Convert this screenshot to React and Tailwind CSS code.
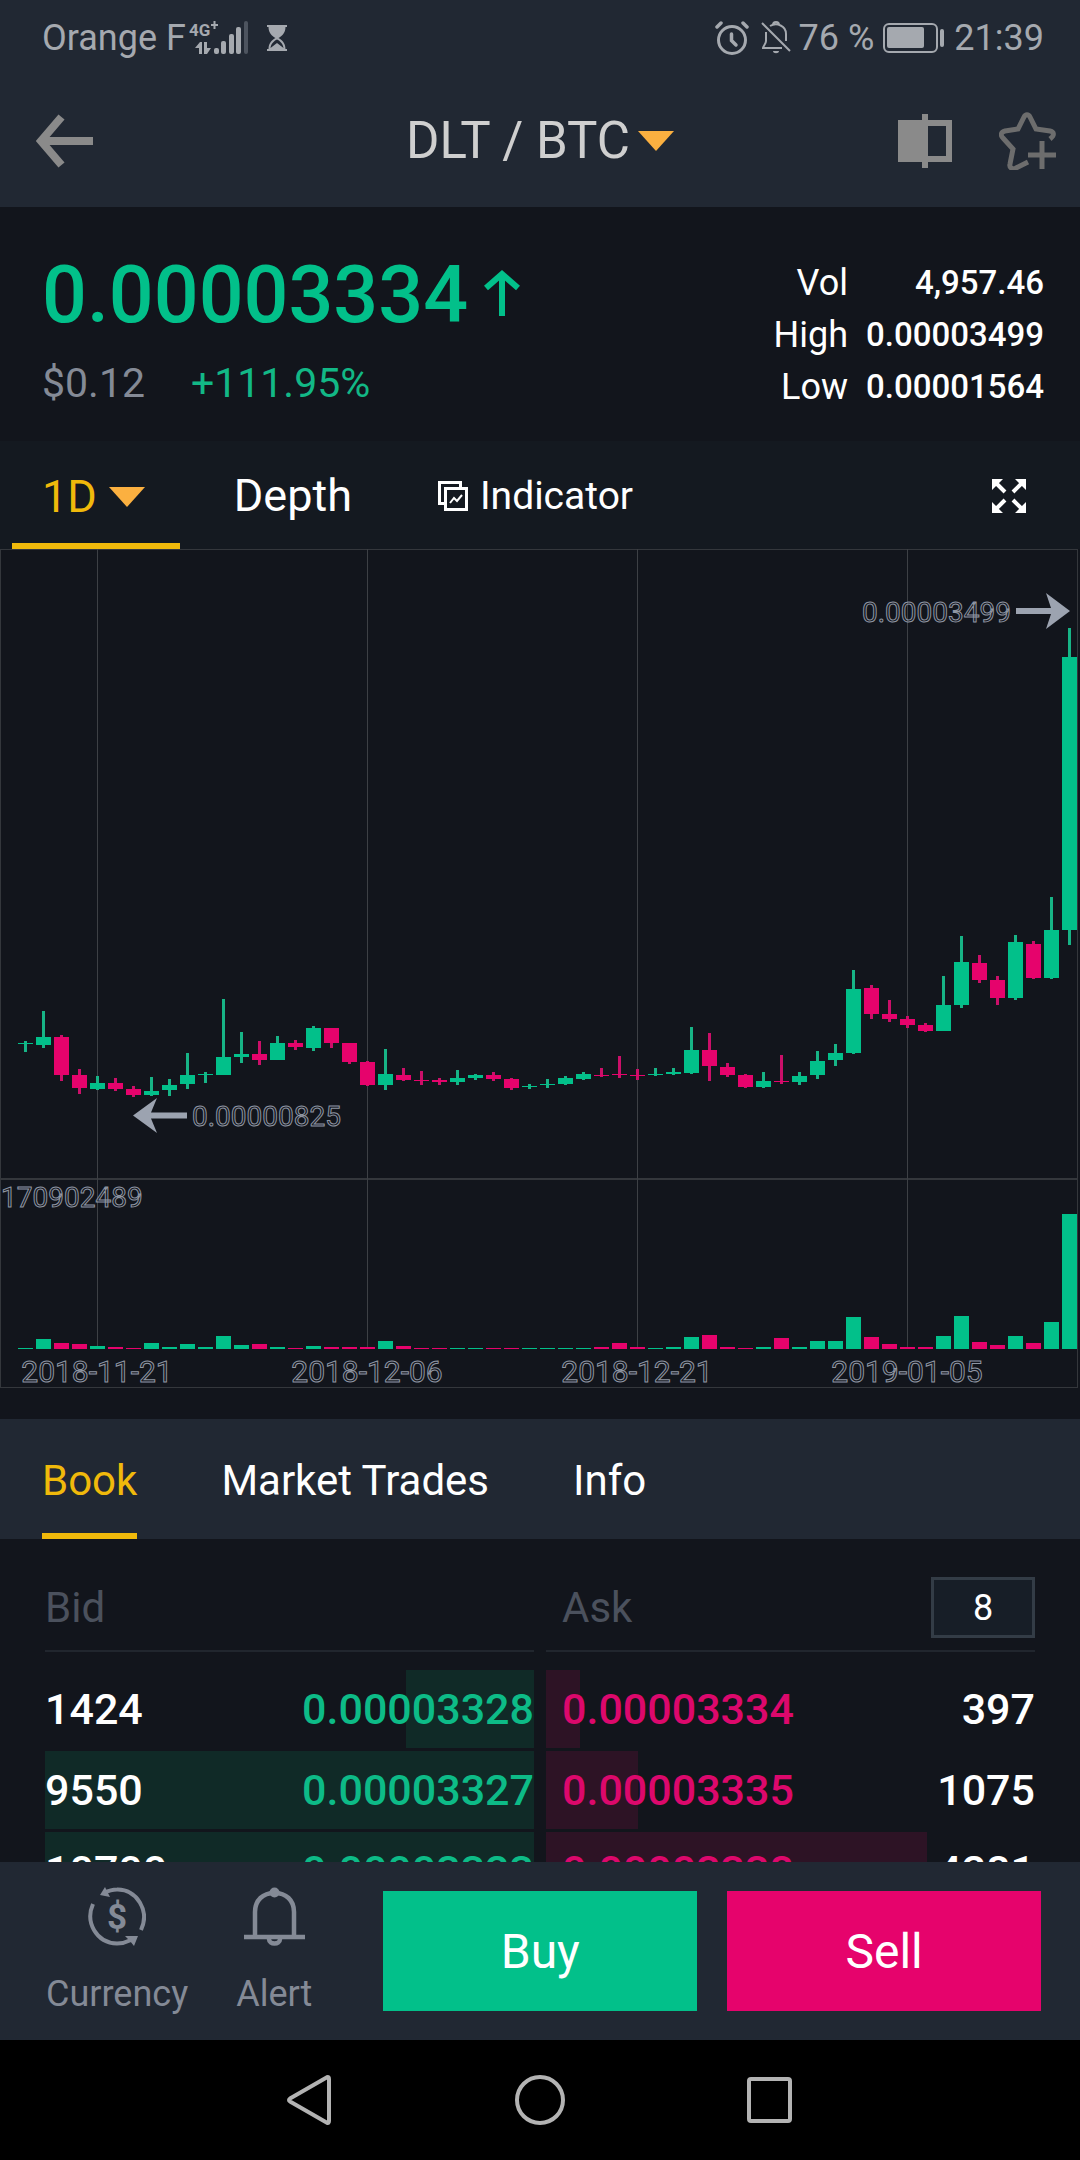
import { useState } from "react";

// [direction, high, bodyTop, bodyBottom, low, volume]
const candles = [
  ["up", 1041, 1043, 1044, 1052, 1],
  ["up", 1011, 1037, 1045, 1048, 10],
  ["down", 1035, 1037, 1075, 1081, 6],
  ["down", 1069, 1075, 1088, 1094, 5],
  ["up", 1076, 1083, 1089, 1090, 3],
  ["down", 1078, 1083, 1089, 1091, 2],
  ["down", 1086, 1089, 1095, 1097, 1],
  ["up", 1077, 1091, 1095, 1096, 6],
  ["up", 1079, 1085, 1090, 1096, 2],
  ["up", 1053, 1075, 1084, 1089, 5],
  ["up", 1072, 1074, 1075, 1083, 2],
  ["up", 999, 1057, 1075, 1075, 13],
  ["up", 1032, 1054, 1057, 1063, 4],
  ["down", 1041, 1054, 1060, 1065, 5],
  ["up", 1036, 1043, 1060, 1060, 2],
  ["down", 1040, 1043, 1047, 1050, 1],
  ["up", 1026, 1028, 1048, 1051, 3],
  ["down", 1028, 1028, 1043, 1048, 2],
  ["down", 1043, 1043, 1062, 1064, 2],
  ["down", 1061, 1062, 1085, 1086, 2],
  ["up", 1049, 1074, 1085, 1090, 8],
  ["down", 1068, 1075, 1080, 1081, 3],
  ["down", 1071, 1080, 1081, 1085, 1],
  ["down", 1078, 1080, 1082, 1085, 1],
  ["up", 1070, 1078, 1082, 1085, 1],
  ["up", 1074, 1075, 1078, 1080, 1],
  ["down", 1072, 1075, 1079, 1081, 1],
  ["down", 1078, 1079, 1088, 1090, 1],
  ["up", 1084, 1086, 1087, 1089, 1],
  ["up", 1079, 1084, 1085, 1088, 1],
  ["up", 1076, 1078, 1084, 1085, 1],
  ["up", 1072, 1074, 1079, 1080, 1],
  ["down", 1068, 1075, 1076, 1077, 2],
  ["down", 1056, 1074, 1075, 1078, 6],
  ["down", 1069, 1075, 1076, 1080, 2],
  ["up", 1068, 1074, 1075, 1076, 1],
  ["up", 1068, 1072, 1074, 1075, 2],
  ["up", 1027, 1050, 1073, 1074, 12],
  ["down", 1033, 1050, 1066, 1081, 14],
  ["down", 1063, 1067, 1075, 1077, 2],
  ["down", 1074, 1075, 1087, 1088, 1],
  ["up", 1072, 1081, 1087, 1088, 2],
  ["down", 1055, 1081, 1082, 1084, 11],
  ["up", 1072, 1076, 1082, 1085, 2],
  ["up", 1051, 1061, 1075, 1079, 8],
  ["up", 1044, 1053, 1060, 1066, 8],
  ["up", 970, 989, 1053, 1054, 32],
  ["down", 985, 988, 1014, 1019, 12],
  ["down", 1000, 1014, 1019, 1022, 5],
  ["down", 1016, 1019, 1025, 1028, 2],
  ["down", 1023, 1025, 1031, 1032, 2],
  ["up", 976, 1005, 1031, 1031, 13],
  ["up", 936, 962, 1005, 1008, 33],
  ["down", 955, 963, 980, 983, 7],
  ["down", 976, 980, 998, 1005, 4],
  ["up", 935, 942, 998, 1000, 13],
  ["down", 941, 944, 978, 979, 6],
  ["up", 897, 930, 978, 979, 27],
  ["up", 628, 657, 930, 945, 135],
];

const dates = [
  { x: 97, label: "2018-11-21" },
  { x: 367, label: "2018-12-06" },
  { x: 637, label: "2018-12-21" },
  { x: 907, label: "2019-01-05" },
];

const stats = [
  { label: "Vol", value: "4,957.46" },
  { label: "High", value: "0.00003499" },
  { label: "Low", value: "0.00001564" },
];

const bids = [
  { amount: "1424", price: "0.00003328", depth: 26.2 },
  { amount: "9550", price: "0.00003327", depth: 100 },
  { amount: "10700", price: "0.00003323", depth: 100 },
];

const asks = [
  { amount: "397", price: "0.00003334", depth: 7 },
  { amount: "1075", price: "0.00003335", depth: 18.8 },
  { amount: "4281", price: "0.00003338", depth: 77.9 },
];

const Caret = () => (
  <svg width="36" height="20" viewBox="0 0 36 20">
    <path d="M0 0H36L18 20Z" fill="#fbb040" />
  </svg>
);

const StatusBar = () => (
  <div className="flex h-[75px] items-center pr-9 pl-[42px] text-[36px] text-[#a5a9af]">
    <span>Orange F</span>
    <svg className="ml-[3px]" width="62" height="36" viewBox="0 0 62 36" fill="currentColor">
      <text x="0" y="16" fontSize="17" fontWeight="700">4G</text>
      <path d="M22 4h2.500v-3h2v3h2.500v2h-2.500v3h-2v-3h-2.500z" />
      <path d="M6 28l5-6h2v12h-3v-6zM15 22h3v6h4l-4 6h-3z" />
      <rect x="25" y="28" width="5" height="6" rx="2" />
      <rect x="32" y="21" width="5" height="13" rx="2" />
      <rect x="40" y="14" width="5" height="20" rx="2" />
      <rect x="47" y="7" width="5" height="27" rx="2" />
      <rect x="55" y="1" width="4" height="33" rx="2" fill="#4d545f" />
    </svg>
    <svg className="ml-4" width="20" height="26" viewBox="0 0 20 26" fill="currentColor">
      <path d="M0 0H20V2H18.500C18.500 8 15 11 11.500 13C15 15 18.500 18 18.500 24H20V26H0V24H1.500C1.500 18 5 15 8.500 13C5 11 1.500 8 1.500 2H0ZM3.500 23L10 18L16.500 23C16 18.500 13 16 10 14.500C7 16 4 18.500 3.500 23Z" fillRule="evenodd" />
    </svg>
    <svg className="ml-auto" width="34" height="34" viewBox="0 0 34 34" fill="none" stroke="currentColor" strokeLinecap="round">
      <circle cx="17" cy="19" r="13.500" strokeWidth="3" />
      <path d="M16.500 13V19.500L21 24" strokeWidth="3.500" />
      <path d="M2 6L6 2M28 2L32 6" strokeWidth="3.500" />
    </svg>
    <svg className="ml-3" width="30" height="34" viewBox="0 0 30 34" fill="none" stroke="currentColor" strokeWidth="2">
      <path d="M5 11V20C5 23 2 25 2 27H21M9 5C16 1 25 5 25 13V20M12 4C12 0 18 0 18 4M1 2L29 30" />
      <path d="M12 30H18C18 33 12 33 12 30Z" fill="currentColor" stroke="none" />
    </svg>
    <span className="ml-2">76 %</span>
    <svg className="ml-[9px]" width="62" height="30" viewBox="0 0 62 30" fill="currentColor">
      <rect x="1" y="1" width="53" height="28" rx="5" fill="none" stroke="currentColor" strokeWidth="2" />
      <rect x="4" y="4" width="37" height="21" rx="2" />
      <rect x="57" y="6" width="4" height="18" rx="2" />
    </svg>
    <span className="ml-[9px]">21:39</span>
  </div>
);

const AppBar = () => (
  <div className="flex h-[132px] items-center justify-between px-6">
    <div className="flex flex-1">
      <button className="ml-3" aria-label="Back">
        <svg width="57" height="54" viewBox="0 0 57 54" fill="none" stroke="#8a8a8a" strokeWidth="8">
          <path d="M25.500 3L5 27L25.500 51M6 27H57" />
        </svg>
      </button>
    </div>
    <button className="flex items-center gap-2 text-[51px] leading-[60px] text-[#cfcfcf]">
      <span>DLT / BTC</span>
      <Caret />
    </button>
    <div className="flex flex-1 items-center justify-end gap-[47px]">
      <button aria-label="Layout">
        <svg width="54" height="54" viewBox="0 0 54 54" fill="#8a8a8a">
          <path d="M0 6H24V0H30V6H54V48H30V54H24V48H0ZM30 12V42H48V12Z" fillRule="evenodd" />
        </svg>
      </button>
      <button aria-label="Add to favorites">
        <svg width="57" height="58" viewBox="0 0 57 58" fill="none" stroke="#6d6d6d" strokeWidth="5">
          <path d="M29 50L17 56C14 58 10 56 11 52L14 37L4 26C1 23 2 20 6 19L19 17L25 5C26.500 2 29.500 2 31 5L37 17L51 19C55 20 56 23 51 27" />
          <path d="M43 29V57M29 43H57" />
        </svg>
      </button>
    </div>
  </div>
);

const Summary = () => (
  <section className="flex items-start justify-between pt-12 pr-9 pb-7 pl-[42px]">
    <div>
      <div className="flex items-center gap-4 text-[79px] leading-[80px] font-medium text-[#02c08a]">
        <span>0.00003334</span>
        <svg className="mb-1" width="36" height="46" viewBox="0 0 36 46" fill="none" stroke="currentColor" strokeWidth="6">
          <path d="M2 18L18 4L34 18M18 4V46" />
        </svg>
      </div>
      <div className="mt-5 flex gap-[46px] text-[41px] leading-[56px]">
        <span className="text-[#848a96]">$0.12</span>
        <span className="text-[#12b886]">+111.95%</span>
      </div>
    </div>
    <dl className="grid grid-cols-[auto_auto] gap-x-[18px] pt-0.5 text-right leading-[52px] text-white">
      {stats.map((stat) => (
        <div key={stat.label} className="contents">
          <dt className="text-[36px]">{stat.label}</dt>
          <dd className="text-[33px] font-medium">{stat.value}</dd>
        </div>
      ))}
    </dl>
  </section>
);

const ChartTabs = () => (
  <div className="flex h-[108px] items-center bg-[#141920] pt-0.5 pr-[54px] pl-3 text-[45px] text-white">
    <button className="flex h-full items-center gap-3 border-b-6 border-[#f0b90b] pt-2 pr-[35px] pl-[30px] text-[#f0b90b]">
      <span>1D</span>
      <Caret />
    </button>
    <button className="ml-[54px]">Depth</button>
    <button className="ml-[86px] flex items-center gap-3 text-[39px]">
      <svg width="30" height="30" viewBox="0 0 30 30" fill="none" stroke="currentColor" strokeWidth="3">
        <path d="M6 22.500H1.500V1.500H22.500V6" />
        <rect x="7.500" y="7.500" width="21" height="21" />
        <path d="M12 22L16 17L19 20L24 14" strokeWidth="2" />
      </svg>
      <span>Indicator</span>
    </button>
    <button className="ml-auto" aria-label="Full screen">
      <svg width="34" height="34" viewBox="0 0 34 34" fill="currentColor" stroke="currentColor">
        <path d="M0 0H11L0 11ZM34 0V11L23 0ZM0 34V23L11 34ZM34 34H23L34 23Z" stroke="none" />
        <path d="M4 4L13 13M30 4L21 13M4 30L13 21M30 30L21 21" strokeWidth="4" />
      </svg>
    </button>
  </div>
);

const Chart = () => (
  <svg className="block w-full" viewBox="0 549 1080 870" role="img" aria-label="DLT / BTC daily candles">
    <g fill="#34373c">
      <rect x="0" y="549" width="1078" height="1" />
      <rect x="0" y="1178" width="1078" height="2" />
      <rect x="0" y="1387" width="1078" height="1" />
      <rect x="0" y="549" width="1" height="839" />
      <rect x="1077" y="549" width="1" height="839" />
      {dates.map((date) => (
        <rect key={date.x} x={date.x} y="549" width="1" height="799" fill="#3d4045" />
      ))}
    </g>
    {candles.map(([direction, high, top, bottom, low, volume], i) => {
      const x = 18 + i * 18;
      const up = direction === "up";
      return (
        <g key={x}>
          <rect x={x + 6} y={high} width="3" height={low - high} fill={up ? "#17b486" : "#cb0f69"} />
          <rect x={x} y={top} width="15" height={bottom - top} fill={up ? "#02c08a" : "#e6036c"} />
          <rect x={x} y={1349 - volume} width="15" height={volume} fill={up ? "#02c08a" : "#e6036c"} />
        </g>
      );
    })}
    <g fill="#9ca3b0">
      <path d="M133 1115.500L157 1098L151 1112.500H187V1118.500H151L157 1133Z" />
      <path d="M1070 611L1046 593L1051 608H1016V614H1051L1046 629Z" />
    </g>
    <g fill="none" stroke="#8f96a3" strokeWidth="1" fontSize="28">
      <text x="192" y="1126">0.00000825</text>
      <text x="1011" y="622" textAnchor="end">0.00003499</text>
      <text x="1" y="1207">170902489</text>
      {dates.map((date) => (
        <text key={date.label} x={date.x} y="1382" fontSize="30" textAnchor="middle">{date.label}</text>
      ))}
    </g>
  </svg>
);

const BookTabs = ({ active, onSelect }) => (
  <div className="flex h-[120px] shrink-0 gap-[84px] bg-[#212833] px-[42px] text-[42px]">
    {["Book", "Market Trades", "Info"].map((tab) => (
      <button
        key={tab}
        onClick={() => onSelect(tab)}
        className={
          tab === active
            ? "border-b-6 border-[#f0b90b] pt-2 text-[#f0b90b]"
            : "border-b-6 border-transparent pt-2 text-white"
        }
      >
        {tab}
      </button>
    ))}
  </div>
);

const OrderTable = ({ title, rows, side, children }) => (
  <table className="w-full border-separate border-spacing-x-0 border-spacing-y-[3px] text-[43px] leading-[78px] font-medium">
    <thead>
      <tr>
        <th colSpan="2" className="p-0 pb-[15px] text-left text-[42px] font-normal text-[#4b515d]">
          <div className={side === "ask" ? "flex h-[110px] items-center justify-between border-b-2 border-[#21262e] pt-[23px] pl-4" : "flex h-[110px] items-center border-b-2 border-[#21262e] pt-[23px]"}>
            <span>{title}</span>
            {children}
          </div>
        </th>
      </tr>
    </thead>
    <tbody>
      {rows.map((row) =>
        side === "bid" ? (
          <tr key={row.price} style={{ background: `linear-gradient(to left, #102a27 ${row.depth}%, transparent ${row.depth}%)` }}>
            <td className="p-0 text-left text-white">{row.amount}</td>
            <td className="p-0 text-right text-[#0dbb87]">{row.price}</td>
          </tr>
        ) : (
          <tr key={row.price} style={{ background: `linear-gradient(to right, #2d1325 ${row.depth}%, transparent ${row.depth}%)` }}>
            <td className="p-0 pl-4 text-left text-[#dc086c]">{row.price}</td>
            <td className="p-0 text-right text-white">{row.amount}</td>
          </tr>
        )
      )}
    </tbody>
  </table>
);

const ActionBar = () => (
  <div className="flex h-[178px] shrink-0 items-center bg-[#212833] pr-[39px] pl-[46px]">
    <button className="flex flex-col items-center gap-[26px] text-[36px] leading-[42px] text-[#848a96]">
      <svg width="58" height="60" viewBox="0 0 58 60" fill="none" stroke="currentColor" strokeWidth="4">
        <path d="M5 17C-3 35 8 56 29 56.500C35 56.500 39 55 43 53M53 43C62 24 49 2 29 2.500C24 2.500 20 4 16 6" />
        <path d="M37 49H50L46 59L42 54ZM12 8L17 0L22 10Z" fill="currentColor" stroke="none" />
        <text x="29" y="42" textAnchor="middle" fontSize="35" fontWeight="700" fill="currentColor" stroke="none">$</text>
      </svg>
      <span>Currency</span>
    </button>
    <button className="ml-12 flex flex-col items-center gap-[26px] text-[36px] leading-[42px] text-[#848a96]">
      <svg width="61" height="60" viewBox="0 0 61 60" fill="none" stroke="currentColor" strokeWidth="4.500">
        <path d="M11 49V25C11 13 19 6 30.500 6C42 6 50 13 50 25V49M0 50H61" />
        <circle cx="30.500" cy="5.500" r="5" fill="currentColor" stroke="none" />
        <path d="M25 52C25 58 36 58 36 52" />
      </svg>
      <span>Alert</span>
    </button>
    <div className="ml-[71px] flex flex-1 gap-[30px] text-[48px] text-white">
      <button className="h-[120px] flex-1 bg-[#02c08a] pt-0.5">Buy</button>
      <button className="h-[120px] flex-1 bg-[#e6036c] pt-0.5">Sell</button>
    </div>
  </div>
);

const SystemNav = () => (
  <nav className="flex h-[120px] shrink-0 items-center justify-center gap-[180px] bg-black">
    <button aria-label="System back">
      <svg width="50" height="50" viewBox="0 0 50 50" fill="none" stroke="#b3b3b3" strokeWidth="4" strokeLinejoin="round">
        <path d="M5 23.500L42 2.200Q44 1.500 44 4V46Q44 48.500 42 47.800L5 26.500Q3 25 5 23.500Z" />
      </svg>
    </button>
    <button aria-label="Home">
      <svg width="50" height="50" viewBox="0 0 50 50" fill="none" stroke="#b3b3b3" strokeWidth="4">
        <circle cx="25" cy="25" r="23" />
      </svg>
    </button>
    <button aria-label="Recent apps">
      <svg width="50" height="50" viewBox="0 0 50 50" fill="none" stroke="#b3b3b3" strokeWidth="4">
        <rect x="4" y="4" width="41" height="42" rx="2" />
      </svg>
    </button>
  </nav>
);

const App = () => {
  const [tab, setTab] = useState("Book");
  const [decimals, setDecimals] = useState("8");

  return (
    <div className="flex h-screen flex-col overflow-hidden bg-[#12151c] font-['Roboto',sans-serif]">
      <header className="shrink-0 bg-[#212833]">
        <StatusBar />
        <AppBar />
      </header>
      <div className="shrink-0">
        <Summary />
        <ChartTabs />
        <Chart />
      </div>
      <BookTabs active={tab} onSelect={setTab} />
      {/* the order list runs under the action bar */}
      <main className="grid min-h-0 flex-1 grid-cols-2 items-start gap-3 overflow-hidden px-[45px]">
        <OrderTable title="Bid" rows={bids} side="bid" />
        <OrderTable title="Ask" rows={asks} side="ask">
          <select
            aria-label="Decimals"
            value={decimals}
            onChange={(e) => setDecimals(e.target.value)}
            className="h-[61px] w-[104px] appearance-none border-3 border-[#333c46] bg-[#171e27] text-center text-[36px] leading-[54px] text-white [text-align-last:center]"
          >
            <option>8</option>
            <option>7</option>
            <option>6</option>
          </select>
        </OrderTable>
      </main>
      <ActionBar />
      <SystemNav />
    </div>
  );
};

export default App;
